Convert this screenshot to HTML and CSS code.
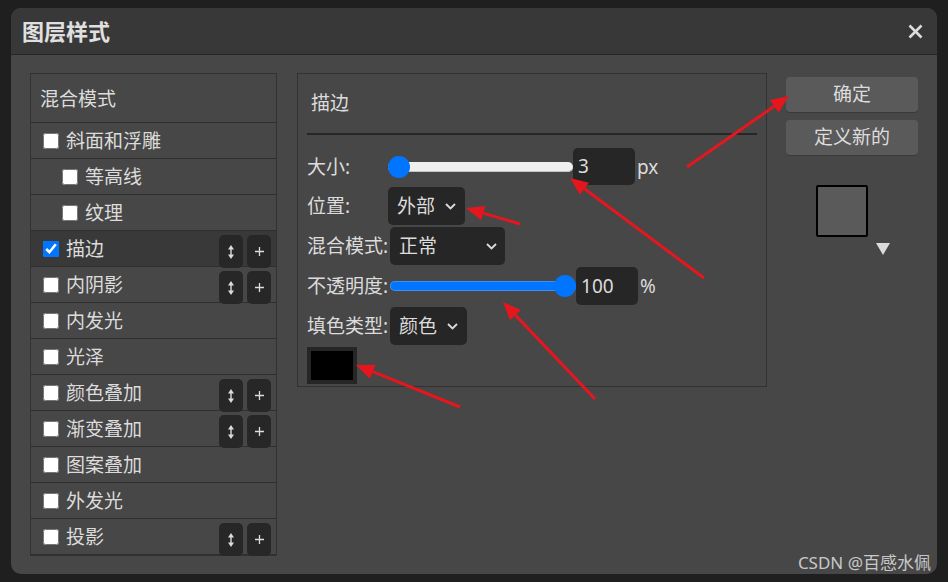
FILE: index.html
```html
<!DOCTYPE html>
<html lang="zh-CN">
<head>
    <meta charset="UTF-8">
    <meta name="viewport" content="width=device-width, initial-scale=1.0">
    <title>图层样式</title>
    <link rel="stylesheet" href="styles.css">
</head>
<body>
    <div class="page">
        <div class="dialog">
            <!-- 标题栏 -->
            <div class="titlebar">
                <span class="title">图层样式</span>
                <svg class="close" width="15" height="15" viewBox="0 0 15 15">
                    <path d="M1.5 1.5 L13.5 13.5 M13.5 1.5 L1.5 13.5" stroke="#dcdcdc" stroke-width="2.6" fill="none"/>
                </svg>
            </div>
            <div class="body">
                <!-- 左侧样式列表 -->
                <div class="styles">
                    <div class="styles_head">混合模式</div>
                    <div class="item"><input type="checkbox"><span>斜面和浮雕</span></div>
                    <div class="item sub"><input type="checkbox"><span>等高线</span></div>
                    <div class="item sub"><input type="checkbox"><span>纹理</span></div>
                    <div class="item active">
                        <input type="checkbox" checked><span>描边</span>
                        <div class="tools">
                            <div class="tool"><svg width="6" height="14" viewBox="0 0 6 14"><path d="M3 0 L6 4.5 H3.7 V9.5 H6 L3 14 L0 9.5 H2.3 V4.5 H0 Z" fill="#dcdcdc"/></svg></div>
                            <div class="tool"><svg width="9" height="9" viewBox="0 0 9 9"><path d="M0 4.5 H9 M4.5 0 V9" stroke="#dcdcdc" stroke-width="1.3"/></svg></div>
                        </div>
                    </div>
                    <div class="item">
                        <input type="checkbox"><span>内阴影</span>
                        <div class="tools">
                            <div class="tool"><svg width="6" height="14" viewBox="0 0 6 14"><path d="M3 0 L6 4.5 H3.7 V9.5 H6 L3 14 L0 9.5 H2.3 V4.5 H0 Z" fill="#dcdcdc"/></svg></div>
                            <div class="tool"><svg width="9" height="9" viewBox="0 0 9 9"><path d="M0 4.5 H9 M4.5 0 V9" stroke="#dcdcdc" stroke-width="1.3"/></svg></div>
                        </div>
                    </div>
                    <div class="item"><input type="checkbox"><span>内发光</span></div>
                    <div class="item"><input type="checkbox"><span>光泽</span></div>
                    <div class="item">
                        <input type="checkbox"><span>颜色叠加</span>
                        <div class="tools">
                            <div class="tool"><svg width="6" height="14" viewBox="0 0 6 14"><path d="M3 0 L6 4.5 H3.7 V9.5 H6 L3 14 L0 9.5 H2.3 V4.5 H0 Z" fill="#dcdcdc"/></svg></div>
                            <div class="tool"><svg width="9" height="9" viewBox="0 0 9 9"><path d="M0 4.5 H9 M4.5 0 V9" stroke="#dcdcdc" stroke-width="1.3"/></svg></div>
                        </div>
                    </div>
                    <div class="item">
                        <input type="checkbox"><span>渐变叠加</span>
                        <div class="tools">
                            <div class="tool"><svg width="6" height="14" viewBox="0 0 6 14"><path d="M3 0 L6 4.5 H3.7 V9.5 H6 L3 14 L0 9.5 H2.3 V4.5 H0 Z" fill="#dcdcdc"/></svg></div>
                            <div class="tool"><svg width="9" height="9" viewBox="0 0 9 9"><path d="M0 4.5 H9 M4.5 0 V9" stroke="#dcdcdc" stroke-width="1.3"/></svg></div>
                        </div>
                    </div>
                    <div class="item"><input type="checkbox"><span>图案叠加</span></div>
                    <div class="item"><input type="checkbox"><span>外发光</span></div>
                    <div class="item">
                        <input type="checkbox"><span>投影</span>
                        <div class="tools">
                            <div class="tool"><svg width="6" height="14" viewBox="0 0 6 14"><path d="M3 0 L6 4.5 H3.7 V9.5 H6 L3 14 L0 9.5 H2.3 V4.5 H0 Z" fill="#dcdcdc"/></svg></div>
                            <div class="tool"><svg width="9" height="9" viewBox="0 0 9 9"><path d="M0 4.5 H9 M4.5 0 V9" stroke="#dcdcdc" stroke-width="1.3"/></svg></div>
                        </div>
                    </div>
                </div>

                <!-- 中间描边设置 -->
                <div class="panel">
                    <div class="panel_title">描边</div>
                    <div class="rows">
                        <div class="row">
                            <span class="label">大小:</span>
                            <input class="range size" type="range" min="1" max="250" value="1">
                            <div class="num">3</div>
                            <span class="unit">px</span>
                        </div>
                        <div class="row">
                            <span class="label">位置:</span>
                            <div class="select w77">
                                <span>外部</span>
                                <svg width="11" height="7" viewBox="0 0 11 7"><path d="M1 1 L5.5 5.5 L10 1" stroke="#dcdcdc" stroke-width="1.8" fill="none"/></svg>
                            </div>
                        </div>
                        <div class="row">
                            <span class="label">混合模式:</span>
                            <div class="select w115">
                                <span>正常</span>
                                <svg width="11" height="7" viewBox="0 0 11 7"><path d="M1 1 L5.5 5.5 L10 1" stroke="#dcdcdc" stroke-width="1.8" fill="none"/></svg>
                            </div>
                        </div>
                        <div class="row">
                            <span class="label">不透明度:</span>
                            <input class="range full" type="range" min="0" max="100" value="100">
                            <div class="num">100</div>
                            <span class="unit">%</span>
                        </div>
                        <div class="row">
                            <span class="label">填色类型:</span>
                            <div class="select w77">
                                <span>颜色</span>
                                <svg width="11" height="7" viewBox="0 0 11 7"><path d="M1 1 L5.5 5.5 L10 1" stroke="#dcdcdc" stroke-width="1.8" fill="none"/></svg>
                            </div>
                        </div>
                        <div class="swatch"><div></div></div>
                    </div>
                </div>

                <!-- 右侧按钮 -->
                <div class="side">
                    <div class="btn">确定</div>
                    <div class="btn">定义新的</div>
                    <div class="preview">
                        <div class="preview_box"></div>
                        <i class="preview_arrow"></i>
                    </div>
                </div>
            </div>
        </div>

        <!-- 标注箭头 -->
        <svg class="marks" width="948" height="582" viewBox="0 0 948 582">
            <g stroke="#e5161e" stroke-width="3" fill="none">
                <line x1="687" y1="167" x2="774.2" y2="106.3"/>
                <line x1="704" y1="278" x2="584.4" y2="188.8"/>
                <line x1="520" y1="224" x2="483.3" y2="213.1"/>
                <line x1="595" y1="399" x2="515.4" y2="315.1"/>
                <line x1="460" y1="407" x2="372.7" y2="371.7"/>
            </g>
            <g fill="#e5161e">
                <polygon points="789,96 778.5,112.4 769.9,100.1"/>
                <polygon points="570,178 588.9,182.8 579.9,194.8"/>
                <polygon points="466,208 485.4,205.9 481.2,220.3"/>
                <polygon points="503,302 520.8,309.9 510,320.2"/>
                <polygon points="356,365 375.5,364.8 369.9,378.7"/>
            </g>
        </svg>

        <div class="watermark">CSDN @百感水佩</div>
    </div>
</body>
</html>
```

FILE: styles.css
```css
*{
    padding: 0;
    margin: 0;
    box-sizing: border-box;
}
body{
    background-color: #1f1f1f;
    font-family: "Noto Sans", "Noto Sans CJK SC", sans-serif;
    color: #dcdcdc;
}
.page{
    position: relative;
    width: 948px;
    height: 582px;
    padding: 8px 11px;
    overflow: hidden;
}
.dialog{
    width: 926px;
    height: 566px;
    background-color: #474747;
    border-radius: 10px;
    overflow: hidden;
}
.titlebar{
    display: flex;
    align-items: center;
    justify-content: space-between;
    height: 47px;
    padding: 0 14px 0 11px;
    background-color: #383838;
    border-bottom: 1px solid #262626;
}
.title{
    font-size: 22px;
    font-weight: bold;
    color: #e0e0e0;
    line-height: 30px;
}
.close{
    display: block;
}
.body{
    display: flex;
    align-items: flex-start;
    padding: 18px 19px 0;
}

/* 左侧列表 */
.styles{
    width: 247px;
    border: 1px solid #323232;
    font-size: 19px;
}
.styles_head{
    height: 49px;
    padding: 2px 0 0 9px;
    line-height: 46px;
    border-bottom: 1px solid #2f2f2f;
}
.item{
    display: flex;
    align-items: center;
    height: 36px;
    padding-left: 12px;
    border-bottom: 1px solid #2f2f2f;
    line-height: 24px;
}
.item.sub{
    padding-left: 31px;
}
.item.active{
    background-color: #393939;
}
.item input{
    width: 16px;
    height: 16px;
    margin: 0 7px 0 0;
}
.tools{
    display: flex;
    gap: 4px;
    align-self: flex-start;
    margin: 4px 5px 0 auto;
}
.tool{
    display: flex;
    align-items: center;
    justify-content: center;
    width: 24px;
    height: 33px;
    background-color: #272727;
    border-radius: 5px;
}

/* 中间面板 */
.panel{
    width: 470px;
    height: 314px;
    margin-left: 20px;
    padding: 0 9px;
    border: 1px solid #323232;
    font-size: 19px;
}
.panel_title{
    height: 61px;
    padding-left: 4px;
    line-height: 59px;
    border-bottom: 2px solid #262626;
}
.rows{
    display: flex;
    flex-direction: column;
    align-items: flex-start;
    gap: 2px;
    margin-top: 13px;
}
.row{
    display: flex;
    align-items: center;
    height: 38px;
}
.row:first-child{
    height: 37px;
}
.label{
    min-width: 79px;
    margin-right: 2px;
    line-height: 24px;
    white-space: nowrap;
}
.range{
    -webkit-appearance: none;
    appearance: none;
    width: 185px;
    height: 22px;
    background: transparent;
}
.range.full{
    width: 186px;
}
.range::-webkit-slider-runnable-track{
    height: 10px;
    border-radius: 5px;
    background-color: #efefef;
    box-shadow: inset 0 -1px 0 #c4c4c4;
}
.range.full::-webkit-slider-runnable-track{
    background-color: #0075ff;
    box-shadow: inset 0 0 0 1px #3f8ff0;
}
.range::-webkit-slider-thumb{
    -webkit-appearance: none;
    width: 22px;
    height: 22px;
    margin-top: -6px;
    border-radius: 50%;
    background-color: #0075ff;
}
.num{
    width: 62px;
    height: 37px;
    padding-left: 5px;
    line-height: 37px;
    background-color: #262626;
    border-radius: 5px;
}
.row:nth-child(4) .num{
    height: 38px;
    line-height: 38px;
}
.unit{
    margin-left: 2px;
    line-height: 24px;
}
.select{
    display: flex;
    align-items: center;
    justify-content: space-between;
    height: 38px;
    padding: 0 9px;
    background-color: #262626;
    border-radius: 5px;
    line-height: 24px;
}
.select svg{
    display: block;
}
.w77{
    width: 77px;
}
.w115{
    width: 115px;
    padding-right: 8px;
}
.swatch{
    width: 50px;
    height: 37px;
    padding: 4px;
    background-color: #262626;
}
.swatch div{
    width: 100%;
    height: 100%;
    background-color: #000;
}

/* 右侧 */
.side{
    width: 132px;
    margin-left: 19px;
    margin-top: 4px;
}
.btn{
    height: 35px;
    margin-bottom: 8px;
    background-color: #5a5a5a;
    border-radius: 4px;
    box-shadow: 0 1px 0 #3a3a3a;
    text-align: center;
    line-height: 35px;
    font-size: 19px;
    color: #dcdcdc;
}
.preview{
    display: flex;
    justify-content: center;
    align-items: flex-start;
    margin-top: 30px;
    padding-left: 2px;
}
.preview_box{
    width: 52px;
    height: 52px;
    background-color: #5a5a5a;
    border: 2px solid #000;
    border-radius: 2px;
}
.preview_arrow{
    width: 0;
    height: 0;
    margin: 58px 0 0 8px;
    border-left: 7px solid transparent;
    border-right: 7px solid transparent;
    border-top: 12px solid #dcdcdc;
}

/* 叠加层 */
.marks{
    position: absolute;
    left: 0;
    top: 0;
    pointer-events: none;
}
.watermark{
    position: absolute;
    right: 17px;
    bottom: 8px;
    font-size: 17px;
    line-height: 22px;
    color: rgba(225, 225, 225, 0.85);
}
```
